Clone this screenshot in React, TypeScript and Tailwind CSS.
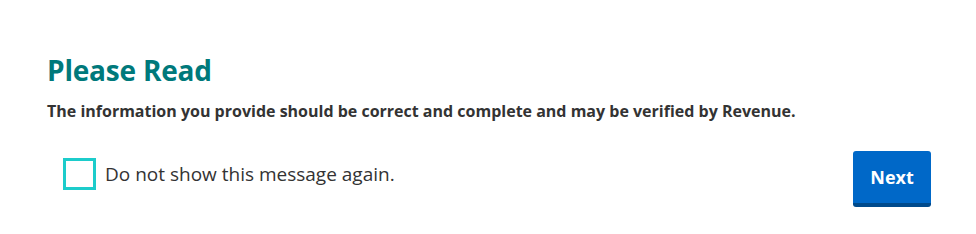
import React from "react";

export default function App() {
  return (
    <div
      className="w-[976px] h-[234px] bg-white text-[#333333]"
      style={{ fontFamily: '"Open Sans", "Noto Sans", sans-serif' }}
    >
      <div className="pl-[47px] pr-[45px] pt-[54px]">
        <h1 className="text-[28px] leading-[32px] font-bold text-[#00797b] tracking-[-0.2px]">
          Please Read
        </h1>
        <p className="mt-[15px] text-[16px] leading-[20px] font-bold text-[#333333]">
          The information you provide should be correct and complete and may be verified by Revenue.
        </p>
        <div className="mt-[30px] flex items-start justify-between">
          <label className="ml-[16px] mt-[7px] flex items-center gap-[9px] cursor-pointer">
            <span className="block w-[33px] h-[32px] border-[3px] border-[#1ccccb] bg-white" />
            <span className="text-[19px] leading-[24px] text-[#333333]">
              Do not show this message again.
            </span>
          </label>
          <button className="w-[78px] h-[56px] rounded-[3px] bg-[#0068c8] border-b-[4px] border-[#004a8c] text-white text-[18px] font-bold">
            Next
          </button>
        </div>
      </div>
    </div>
  );
}
